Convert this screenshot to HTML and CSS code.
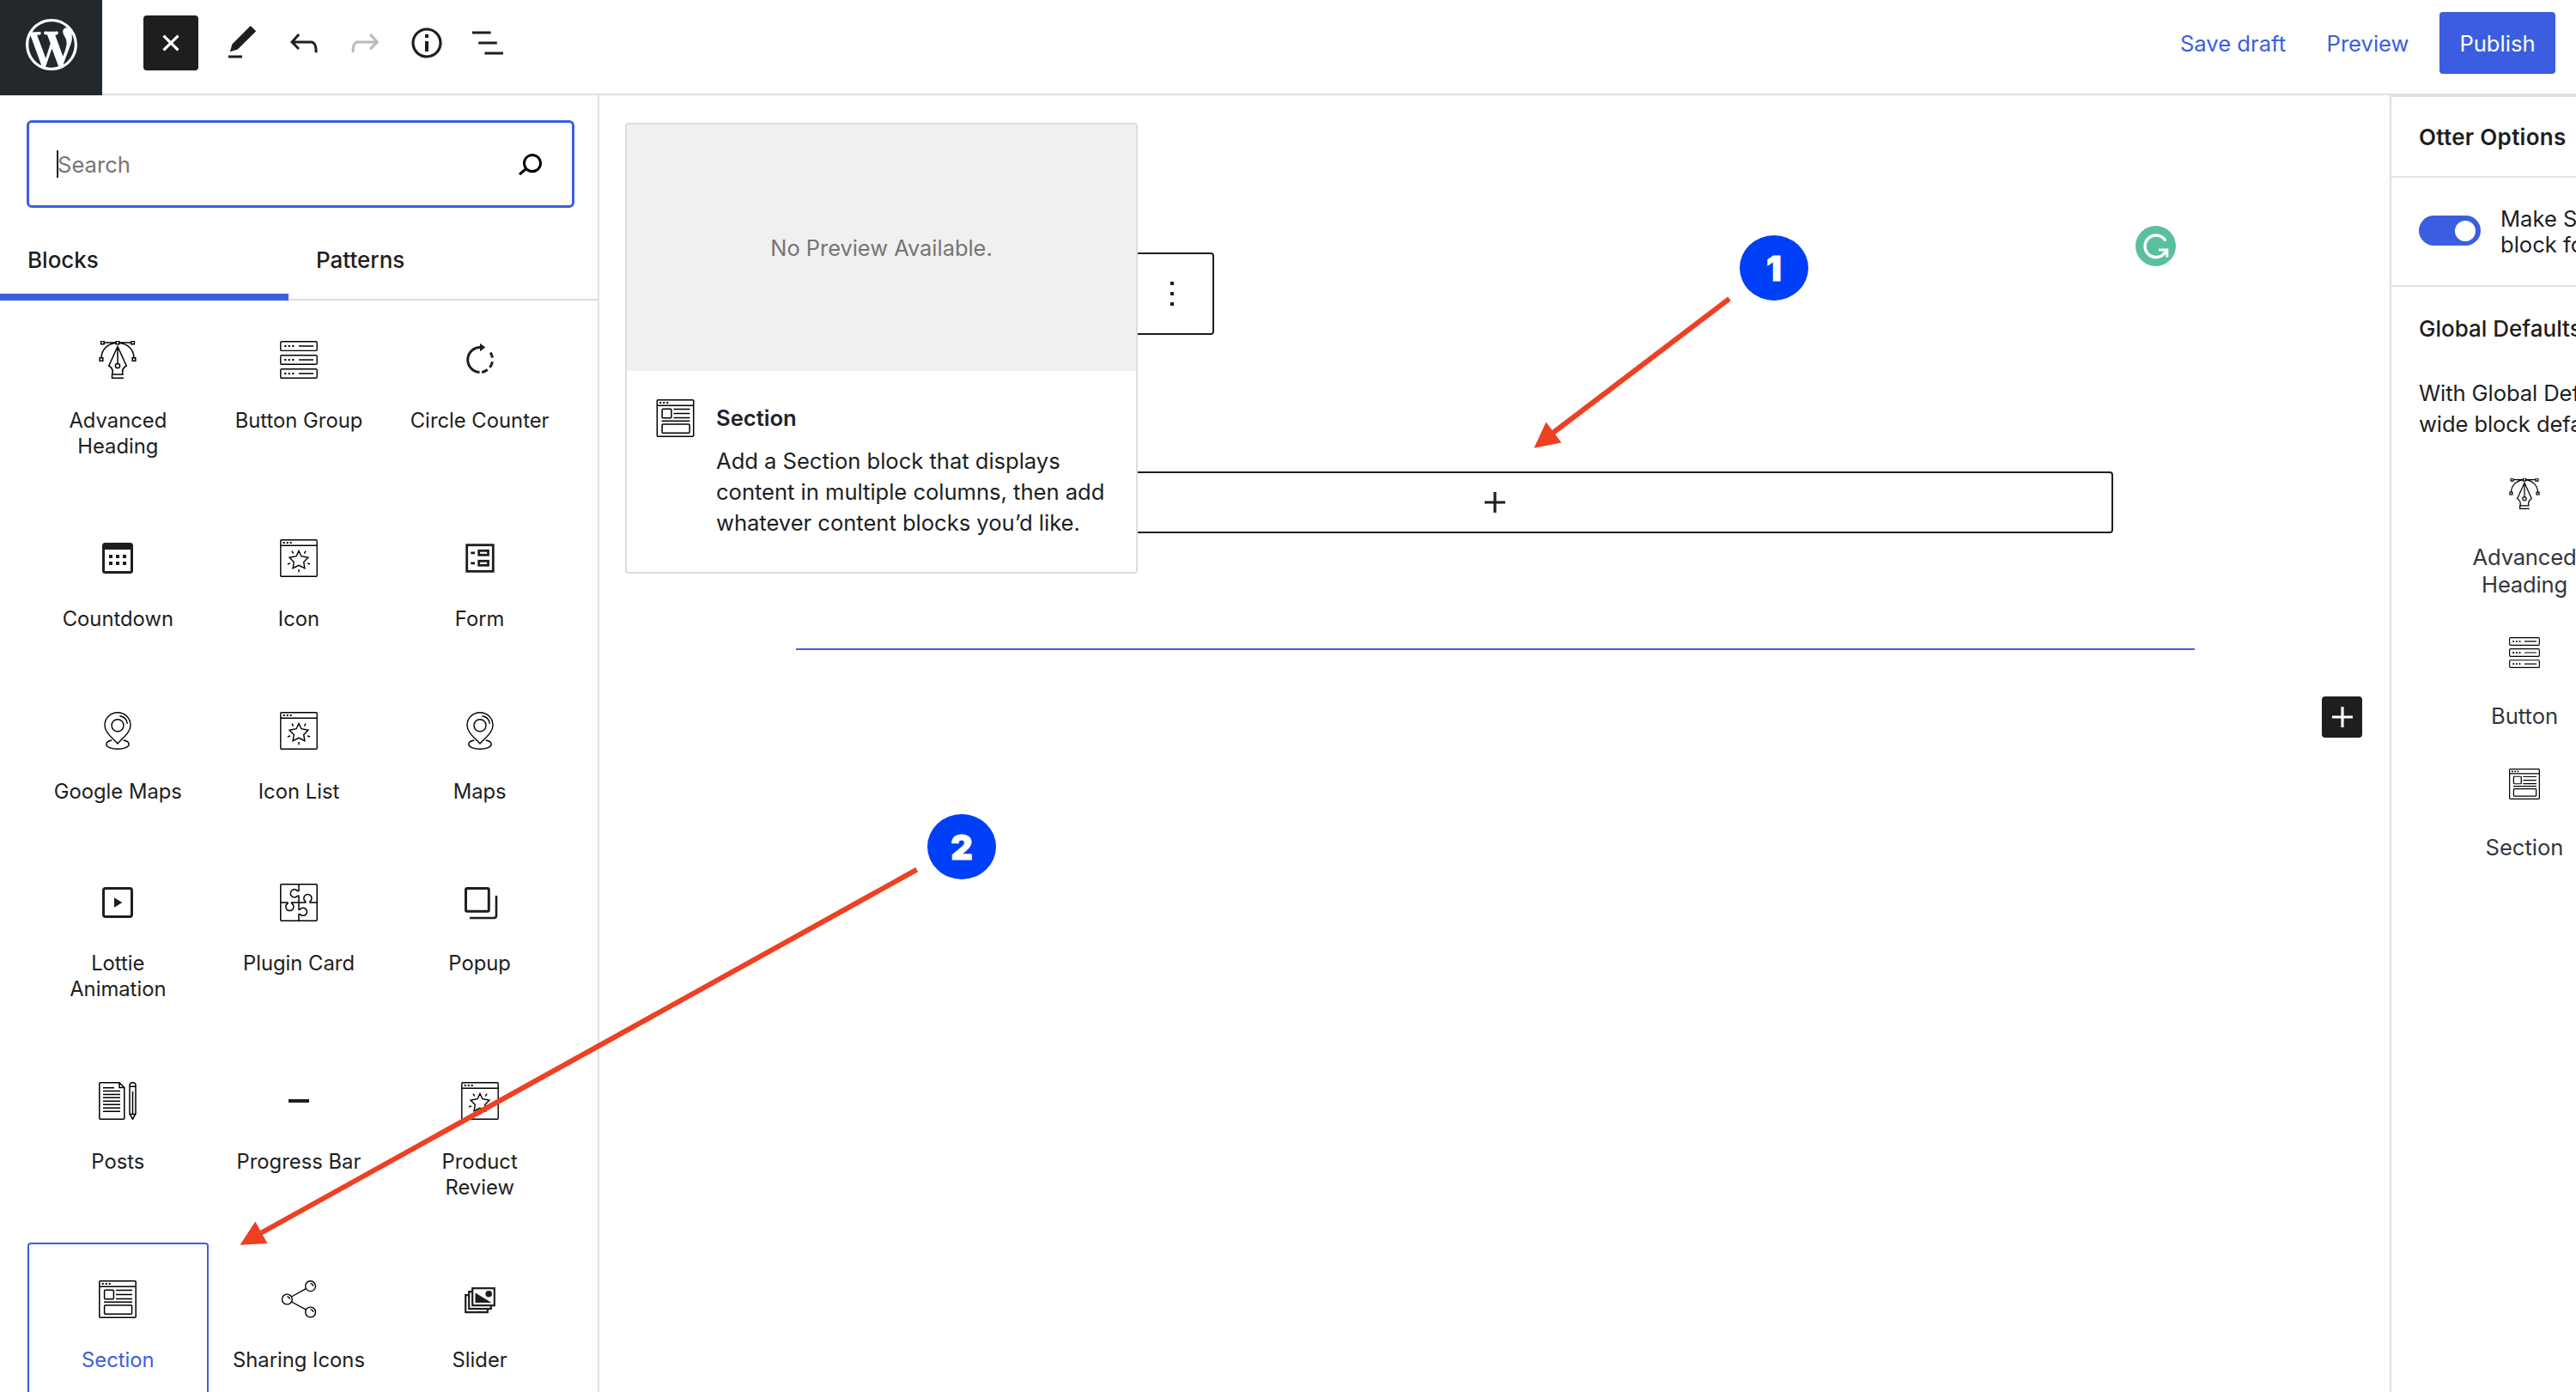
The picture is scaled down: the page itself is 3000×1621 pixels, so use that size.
FILE: index.html
```html
<!DOCTYPE html>
<html lang="en">
<head>
<meta charset="utf-8">
<title>Edit Post</title>
<link rel="stylesheet" href="styles.css">
</head>
<body>
<svg class="sprite" aria-hidden="true">
  <symbol id="i-heading" viewBox="0 0 44 44"><g fill="none" stroke="#000" stroke-width="1.5"><path d="M6.5 2H20M24 2h13.500M20 2.300C10 3.500 3.500 10 3 19.500M24 2.300C34 3.500 40.500 10 41 19.500"/><path fill="#fff" d="M2.600.3h3.600v3.500H2.600zM20.200.3h3.600v3.500h-3.600zM37.800.3h3.600v3.500h-3.600zM1.200 19.700h3.600v3.500H1.200zM39.200 19.700h3.600v3.500h-3.600z"/><path d="M22 6.500 11.800 29c3.700 2 5.200 5 4 10H28c-1.200-5 .3-8 4.200-10zM22 6.500v20M29 43.300H15.500V39H28"/><circle cx="22" cy="29" r="2.600"/></g></symbol>
  <symbol id="i-buttons" viewBox="0 0 44 44"><g fill="none" stroke="#000" stroke-width="1.400"><rect x=".8" y=".8" width="42.400" height="10.600" rx="1.200"/><rect x=".8" y="16.700" width="42.400" height="10.600" rx="1.200"/><rect x=".8" y="32.700" width="42.400" height="10.600" rx="1.200"/><path d="M22 6h17M22 22h17M22 38h17"/><path stroke-width="2.200" d="M5.200 6h2.200m2.300 0h2.200m2.300 0h2.200M5.200 22h2.200m2.300 0h2.200m2.300 0h2.200M5.200 38h2.200m2.300 0h2.200m2.300 0h2.200"/></g></symbol>
  <symbol id="i-counter" viewBox="0 0 44 44"><g fill="none" stroke="#1e1e1e" stroke-width="3"><path d="M23 7.500A14.500 14.500 0 0 0 21.500 36.500"/><path d="M34.200 13.500a14.500 14.500 0 0 1 2.200 6M36.400 24.200a14.500 14.500 0 0 1-2.900 6.700M30.800 33.500a14.500 14.500 0 0 1-6.700 2.900"/></g><path fill="#1e1e1e" d="M22 2.700 28.300 7.500 22 12.300z"/></symbol>
  <symbol id="i-countdown" viewBox="0 0 44 44"><rect x="5.500" y="5.500" width="33" height="33" rx="2" fill="none" stroke="#1e1e1e" stroke-width="3"/><path fill="#1e1e1e" d="M5 5h34v7H5zM12 18h4v4h-4zM20 18h4v4h-4zM28 18h4v4h-4zM12 26h4v4h-4zM20 26h4v4h-4zM28 26h4v4h-4z"/></symbol>
  <symbol id="i-star" viewBox="0 0 44 44"><g fill="none" stroke="#000" stroke-width="1.400"><rect x=".8" y=".8" width="42.400" height="42.400" rx="1"/><path d="M1 7.300h42"/><path stroke-width="2" d="M3.700 4.100h2m2 0h2m2 0h2"/><path d="M22 13.500l2.900 6.200 8 1.500-5.200 5.200 1.200 7.300-6.900-3.300-6.900 3.300 1.200-7.300-5.200-5.200 8-1.500zM14 13.700l1.600 3M30 13.700l-1.600 3M9 29l3-1.200M35 29l-3-1.200M22 35v3.300"/></g></symbol>
  <symbol id="i-form" viewBox="0 0 44 44"><g fill="none" stroke="#1e1e1e" stroke-width="2.800"><rect x="6.700" y="6.700" width="30.600" height="30.600"/><rect x="20.700" y="13.300" width="10.800" height="5"/><rect x="20.700" y="25.300" width="10.800" height="5"/><path d="M11.300 15.900H16M11.300 27.900H16"/></g></symbol>
  <symbol id="i-pin" viewBox="0 0 44 44"><g fill="none" stroke="#000" stroke-width="1.400"><path d="M22 37C15 29.500 7 23.500 7 15.700a15 15 0 0 1 30 0C37 23.500 29 29.500 22 37z"/><circle cx="22" cy="15.700" r="7"/><path d="M24.300 4.700c5 .6 8.500 4 9 9.300M15.300 33c-4 .8-6.500 2.500-6.500 4.700 0 3 5.500 5.500 13.200 5.500s13.200-2.500 13.200-5.500c0-2.200-2.500-3.900-6.500-4.700"/></g></symbol>
  <symbol id="i-play" viewBox="0 0 44 44"><rect x="5.500" y="5.500" width="33" height="33" rx="2.500" fill="none" stroke="#1e1e1e" stroke-width="3"/><path fill="#1e1e1e" d="M18 16.300 27.300 22 18 27.700z"/></symbol>
  <symbol id="i-puzzle" viewBox="0 0 44 44"><g fill="none" stroke="#000" stroke-width="1.500"><rect x=".8" y=".8" width="42.400" height="42.400" rx="1"/><path d="M22 1v7.500h-1.500a4.600 4.600 0 1 0 0 5.800H22V31M22 22h7.800v-1.200a4.600 4.600 0 1 1 5.200 0V22h8M1 22h8v1a4.600 4.600 0 1 0 4.800 0v-1H22M22 43v-7.500h1.200a4.600 4.600 0 1 0 0-5.500H22"/></g></symbol>
  <symbol id="i-popup" viewBox="0 0 44 44"><g fill="none" stroke="#1e1e1e" stroke-width="3"><rect x="5.500" y="5.500" width="26.800" height="26.800" rx="1.500"/><path stroke-width="2.600" d="M41 14v23q0 3-3 3H10"/></g></symbol>
  <symbol id="i-posts" viewBox="0 0 44 44"><g fill="none" stroke="#000" stroke-width="1.500"><path d="M24 .8H1.800q-1 0-1 1v40.400q0 1 1 1h27q1 0 1-1V6.500zM24 .8v5.700h5.800M5 6.700h13M5 10.500h20M5 14.400h20M5 18.300h20M5 22.300h20M5 26.300h20M5 30.300h20M5 34.300h20"/><path d="M36 4q0-3.200 3.500-3.200T43 4v33l-3.500 6.200L36 37zM36 5.200h7M39.500 11v26M36 37.500h7"/></g></symbol>
  <symbol id="i-bar" viewBox="0 0 44 44"><path fill="#1e1e1e" d="M10 20h24v4H10z"/></symbol>
  <symbol id="i-section" viewBox="0 0 44 44"><g fill="none" stroke="#000" stroke-width="1.500"><rect x=".8" y=".8" width="42.400" height="42.400" rx="1"/><path d="M1 7.300h42"/><path stroke-width="2" d="M3.700 4.100h2m2 0h2m2 0h2"/><rect x="6.600" y="11.300" width="10.800" height="10.400" rx="1"/><path d="M20 11.600h19M20 16.600h19M20 21.600h19M6 25.300h33"/><rect x="6.600" y="28.900" width="32" height="10.400" rx="1"/></g></symbol>
  <symbol id="i-share" viewBox="0 0 44 44"><g fill="none" stroke="#000" stroke-width="1.400"><circle cx="35.600" cy="6.700" r="5.900"/><circle cx="8.400" cy="22" r="5.900"/><circle cx="35.600" cy="37" r="5.900"/><path d="M13.500 19 30.400 9.600M13.500 25l16.900 9.200M35.500 3.600q3 0 3.200 3M8.300 18.900q3 0 3.200 3M35.500 33.900q3 0 3.200 3"/></g></symbol>
  <symbol id="i-slider" viewBox="0 0 44 44"><g fill="none" stroke="#1e1e1e" stroke-width="2.200"><rect x="13.200" y="9.200" width="25.600" height="20"/><path d="M13 13.200H9.200v20h25.600V29M9 17.200H5.200v20h25.600V33"/></g><path fill="#1e1e1e" d="M16.500 14.500 35.500 26h-19z"/><circle cx="32.200" cy="15.700" r="3.800" fill="#1e1e1e"/></symbol>
</svg>

<header class="header">
  <div class="logo"><svg width="72" height="72" viewBox="-2 -2 24 24"><path fill="#fff" d="M20 10c0-5.510-4.490-10-10-10C4.480 0 0 4.490 0 10c0 5.520 4.480 10 10 10 5.510 0 10-4.480 10-10zM7.780 15.370L4.370 6.220c.55-.02 1.170-.08 1.170-.08.5-.06.44-1.130-.06-1.110 0 0-1.450.11-2.370.11-.18 0-.37 0-.58-.01C4.120 2.690 6.870 1.110 10 1.110c2.330 0 4.450.87 6.050 2.340-.68-.11-1.650.39-1.650 1.580 0 .74.45 1.360.9 2.100.35.61.55 1.360.55 2.460 0 1.490-1.400 5-1.400 5l-3.030-8.370c.54-.02.82-.17.82-.17.5-.05.44-1.250-.06-1.220 0 0-1.440.12-2.380.12-.87 0-2.330-.12-2.330-.12-.5-.03-.56 1.200-.06 1.220l.92.08 1.260 3.410zM17.410 10c.24-.64.74-1.870.43-4.250.7 1.290 1.050 2.710 1.050 4.250 0 3.290-1.730 6.240-4.400 7.780.97-2.590 1.940-5.200 2.920-7.780zM6.100 18.090C3.120 16.650 1.110 13.530 1.110 10c0-1.300.23-2.480.72-3.590C3.250 10.300 4.670 14.200 6.100 18.090zm4.030-6.630l2.580 6.980c-.86.29-1.760.45-2.710.45-.79 0-1.570-.11-2.290-.33.81-2.380 1.620-4.740 2.420-7.100z"/></svg></div>
  <div class="tools">
    <button class="close"><svg width="48" height="48" viewBox="0 0 24 24"><path fill="#fff" transform="rotate(45 12 12)" d="M18 11.200h-5.200V6h-1.600v5.200H6v1.600h5.200V18h1.600v-5.200H18z"/></svg></button>
    <div class="toolset">
      <svg width="48" height="48" viewBox="0 0 24 24"><path d="M20.100 5.100L16.900 2 6.200 12.700l-1.300 4.400 4.500-1.300L20.100 5.100zM4 20.800h8v-1.500H4v1.500z"/></svg>
      <svg width="48" height="48" viewBox="0 0 24 24"><path d="M18.300 11.700c-.6-.6-1.400-.9-2.300-.9H6.700l2.900-3.300-1.100-1-4.500 5L8.500 16l1-1-2.700-2.700H16c.5 0 .9.2 1.300.5 1 1 1 3.400 1 4.500v.3h1.500v-.2c0-1.500 0-4.300-1.500-5.700z"/></svg>
      <svg class="disabled" width="48" height="48" viewBox="0 0 24 24"><path d="M15.600 6.500l-1.100 1 2.900 3.300H8c-.9 0-1.700.3-2.300.9-1.400 1.500-1.400 4.200-1.400 5.600v.2h1.500v-.3c0-1.100 0-3.500 1-4.500.3-.3.7-.5 1.300-.5h9.200L14.500 15l1.100 1.100 4.600-4.600-4.600-5z"/></svg>
      <svg width="48" height="48" viewBox="0 0 24 24"><path d="M12 3.200c-4.800 0-8.800 3.900-8.800 8.800 0 4.800 3.900 8.800 8.800 8.800 4.800 0 8.800-3.900 8.800-8.800 0-4.800-4-8.800-8.800-8.800zm0 16c-4 0-7.200-3.300-7.200-7.200C4.800 8 8 4.800 12 4.800s7.200 3.300 7.200 7.200c0 4-3.200 7.200-7.200 7.200zM11 17h2v-6h-2v6zm0-8h2V7h-2v2z"/></svg>
      <svg width="48" height="48" viewBox="0 0 24 24"><path d="M13.800 5.200H3v1.500h10.800V5.200zm-3.600 12v1.500H21v-1.500H10.200zm7.200-6H6.600v1.500h10.800v-1.500z"/></svg>
    </div>
  </div>
  <nav class="actions"><a class="link">Save draft</a><a class="link">Preview</a><button class="publish">Publish</button></nav>
</header>

<div class="layout">
  <aside class="inserter">
    <div class="search"><span class="caret"></span><span class="placeholder">Search</span><svg width="48" height="48" viewBox="0 0 24 24"><path d="M13.500 6C10.500 6 8 8.500 8 11.500c0 1.100.3 2.100.9 3l-3.400 3 1 1.100 3.400-2.900c1 .9 2.200 1.400 3.600 1.400 3 0 5.500-2.500 5.500-5.500C19 8.500 16.500 6 13.500 6zm0 9.500c-2.200 0-4-1.800-4-4s1.800-4 4-4 4 1.800 4 4-1.800 4-4 4z"/></svg></div>
    <div class="tabs"><span class="tab active">Blocks</span><span class="tab">Patterns</span></div>
    <div class="grid">
      <div class="item"><svg><use href="#i-heading"/></svg><span>Advanced<br>Heading</span></div>
      <div class="item"><svg><use href="#i-buttons"/></svg><span>Button Group</span></div>
      <div class="item"><svg><use href="#i-counter"/></svg><span>Circle Counter</span></div>
      <div class="item"><svg><use href="#i-countdown"/></svg><span>Countdown</span></div>
      <div class="item"><svg><use href="#i-star"/></svg><span>Icon</span></div>
      <div class="item"><svg><use href="#i-form"/></svg><span>Form</span></div>
      <div class="item"><svg><use href="#i-pin"/></svg><span>Google Maps</span></div>
      <div class="item"><svg><use href="#i-star"/></svg><span>Icon List</span></div>
      <div class="item"><svg><use href="#i-pin"/></svg><span>Maps</span></div>
      <div class="item"><svg><use href="#i-play"/></svg><span>Lottie<br>Animation</span></div>
      <div class="item"><svg><use href="#i-puzzle"/></svg><span>Plugin Card</span></div>
      <div class="item"><svg><use href="#i-popup"/></svg><span>Popup</span></div>
      <div class="item"><svg><use href="#i-posts"/></svg><span>Posts</span></div>
      <div class="item"><svg><use href="#i-bar"/></svg><span>Progress Bar</span></div>
      <div class="item"><svg><use href="#i-star"/></svg><span>Product<br>Review</span></div>
      <div class="item selected"><svg><use href="#i-section"/></svg><span>Section</span></div>
      <div class="item"><svg><use href="#i-share"/></svg><span>Sharing Icons</span></div>
      <div class="item"><svg><use href="#i-slider"/></svg><span>Slider</span></div>
    </div>
  </aside>

  <main class="canvas">
    <div class="block-toolbar"><svg width="48" height="48" viewBox="0 0 24 24"><path d="M13 19h-2v-2h2v2zm0-6h-2v-2h2v2zm0-6h-2V5h2v2z"/></svg></div>
    <div class="appender"><svg width="48" height="48" viewBox="0 0 24 24"><path d="M18 11.200h-5.200V6h-1.600v5.200H6v1.600h5.200V18h1.600v-5.200H18z"/></svg></div>
    <div class="insertion-line"></div>
    <button class="add-block"><svg width="48" height="48" viewBox="0 0 24 24"><path fill="#fff" d="M18 11.200h-5.200V6h-1.600v5.200H6v1.600h5.200V18h1.600v-5.200H18z"/></svg></button>
  </main>

  <aside class="settings">
    <h2 class="settings-title">Otter Options</h2>
    <div class="toggle-row"><span class="toggle"><span class="knob"></span></span><span class="toggle-label">Make S<br>block fo</span></div>
    <h3 class="group-title">Global Defaults</h3>
    <p class="group-text">With Global Def<br>wide block defa</p>
    <div class="defaults">
      <div class="default two-line"><svg><use href="#i-heading"/></svg><span>Advanced<br>Heading</span></div>
      <div class="default"><svg><use href="#i-buttons"/></svg><span>Button</span></div>
      <div class="default"><svg><use href="#i-section"/></svg><span>Section</span></div>
    </div>
  </aside>
</div>

<div class="preview">
  <div class="preview-empty">No Preview Available.</div>
  <div class="preview-card">
    <svg><use href="#i-section"/></svg>
    <div><div class="preview-title">Section</div><p class="preview-text">Add a Section block that displays<br>content in multiple columns, then add<br>whatever content blocks you’d like.</p></div>
  </div>
</div>

<svg class="grammar" width="47" height="47" viewBox="0 0 47 47"><circle cx="23.500" cy="23.500" r="23.500" fill="#5ac09b"/><path fill="none" stroke="#fff" stroke-width="3.400" d="M35 17.500A12.800 12.800 0 1 0 35 30"/><path fill="none" stroke="#fff" stroke-width="3.200" d="M27 28h9.700v8.500"/></svg>

<svg class="annotations" width="3000" height="1621" viewBox="0 0 3000 1621"><g fill="#ee4023"><path d="M1786.500 521.700 1800.500 491.500 1818.500 515.500z"/><path d="M279.500 1449.700 297.300 1422.500 311.500 1448z"/></g><g stroke="#ee4023" stroke-width="6"><path d="M2014 347.800 1806 506"/><path d="M1067.700 1012.700 300 1438"/></g></svg>
<div class="badge badge-one">1</div>
<div class="badge badge-two">2</div>
</body>
</html>
```

FILE: styles.css
```css
* { box-sizing: border-box; }

body {
  margin: 0;
  width: 3000px;
  height: 1621px;
  overflow: hidden;
  position: relative;
  display: flex;
  flex-direction: column;
  background: #fff;
  color: #1e1e1e;
  font: 400 25.6px/36px Inter, "Liberation Sans", sans-serif;
}

svg { display: block; flex: none; fill: #1e1e1e; }
.sprite { position: absolute; width: 0; height: 0; }
button { border: 0; padding: 0; font: inherit; }
h2, h3, p { margin: 0; }

/* Top bar */
.header {
  display: flex;
  flex: none;
  height: 111px;
  border-bottom: 2px solid #e0e0e0;
}
.logo {
  width: 119px;
  height: 111px;
  background: #23282d;
  padding: 16px 0 0 24px;
}
.tools { display: flex; align-items: flex-start; padding: 18px 0 0 48px; gap: 27px; }
.close {
  width: 64px;
  height: 64px;
  border-radius: 4px;
  background: #1e1e1e;
  display: flex;
  align-items: center;
  justify-content: center;
}
.toolset { display: flex; align-items: center; height: 64px; gap: 23.5px; }
.disabled { opacity: .3; }
.actions {
  margin-left: auto;
  display: flex;
  align-items: center;
  height: 72px;
  margin-top: 14px;
  padding-right: 24px;
}
.link { color: #3b5ee1; margin-right: 47.500px; padding-top: 1px; }
.link + .link { margin-right: 35.500px; }
.publish {
  width: 135px;
  height: 72px;
  border-radius: 4px;
  background: #3b5ee1;
  color: #fff;
  padding-top: 1px;
}

.layout { display: flex; flex: 1; min-height: 0; }

/* Block library */
.inserter {
  width: 698px;
  border-right: 2px solid #e0e0e0;
  padding-top: 29px;
  overflow: hidden;
}
.search {
  margin: 0 27px 0 31px;
  height: 102px;
  border: 3px solid #3b5ee1;
  border-radius: 6px;
  display: flex;
  align-items: center;
  padding: 0 25px 0 32px;
}
.search svg { margin-left: auto; fill: #000; }
.caret { width: 2px; height: 32px; background: #1e1e1e; margin-right: -1px; }
.placeholder { color: #757575; padding-top: 1px; }
.tabs { display: flex; height: 108px; border-bottom: 2px solid #ddd; }
.tab {
  width: 336px;
  height: 108px;
  padding: 43px 0 0 32px;
  font-size: 26px;
  font-weight: 500;
}
.tab.active { border-bottom: 8px solid #3b5ee1; }
.grid {
  display: grid;
  grid-template-columns: repeat(3, 210.670px);
  padding: 3px 0 0 32px;
}
.item {
  display: flex;
  flex-direction: column;
  align-items: center;
  gap: 34px;
  padding: 44px 0 48.800px;
  font-size: 23.800px;
  line-height: 30px;
  text-align: center;
}
.item svg { width: 44px; height: 44px; }
.item.selected {
  color: #3b5ee1;
  border: 2px solid #3b5ee1;
  border-radius: 4px;
  padding: 42px 0 48px;
}

/* Editor canvas */
.canvas {
  flex: 1;
  display: flex;
  flex-direction: column;
  align-items: flex-start;
  padding-top: 183px;
}
.block-toolbar {
  margin-left: 323px;
  width: 393px;
  height: 96px;
  border: 2px solid #1e1e1e;
  border-radius: 4px;
  display: flex;
  align-items: center;
  justify-content: flex-end;
  padding-right: 23px;
}
.appender {
  margin: 159px 0 0 323px;
  width: 1440px;
  height: 72px;
  border: 2px solid #1e1e1e;
  border-radius: 4px;
  display: flex;
  align-items: center;
  justify-content: center;
}
.insertion-line { margin: 134px 0 0 229px; width: 1629px; height: 2px; background: #3b5ee1; }
.add-block {
  align-self: flex-end;
  margin: 54px 32px 0 0;
  width: 47px;
  height: 48px;
  border-radius: 4px;
  background: #1e1e1e;
  display: flex;
  justify-content: center;
}

/* Settings sidebar */
.settings {
  width: 217px;
  border-left: 2px solid #e0e0e0;
  overflow: hidden;
  white-space: nowrap;
}
.settings-title {
  height: 96px;
  border-top: 2px solid #e0e0e0;
  border-bottom: 2px solid #e0e0e0;
  padding: 29px 0 0 32px;
  font-size: 26px;
  font-weight: 600;
  letter-spacing: .3px;
}
.toggle-row {
  display: flex;
  gap: 23px;
  height: 127px;
  border-bottom: 2px solid #e0e0e0;
  padding: 32px 0 0 32px;
}
.toggle {
  flex: none;
  width: 72px;
  height: 35px;
  margin-top: 12px;
  border-radius: 18px;
  background: #3b5ee1;
  padding: 5.500px 6px;
  display: flex;
  justify-content: flex-end;
}
.knob { width: 24px; height: 24px; border-radius: 50%; background: #fff; }
.toggle-label { line-height: 30px; padding-top: 1px; }
.group-title { padding: 31px 0 0 32px; font-size: 26px; font-weight: 500; }
.group-text { padding: 39px 0 0 32px; letter-spacing: -.1px; }
.defaults { padding: 45px 0 0 58px; width: 254px; }
.default {
  display: flex;
  flex-direction: column;
  align-items: center;
  width: 194px;
  height: 153px;
  gap: 40px;
  color: #32373c;
  line-height: 32px;
  text-align: center;
}
.default.two-line { height: 185px; letter-spacing: -.2px; }
.default svg { width: 36px; height: 36px; }

/* Block preview popover */
.preview {
  position: absolute;
  left: 728px;
  top: 143px;
  width: 597px;
  height: 525px;
  border: 2px solid #ddd;
  border-radius: 4px;
  background: #fff;
}
.preview-empty {
  height: 287px;
  background: #f0f0f0;
  color: #757575;
  font-size: 25.400px;
  display: flex;
  align-items: center;
  justify-content: center;
}
.preview-card { display: flex; gap: 25px; padding: 33px 0 0 34px; }
.preview-card svg { width: 45px; height: 44px; }
.preview-title { padding-top: 4px; font-weight: 600; color: #1d2327; }
.preview-text { padding-top: 14px; letter-spacing: -.03px; }

.grammar { position: absolute; left: 2487px; top: 263px; }

/* Callouts */
.annotations { position: absolute; left: 0; top: 0; }
.badge {
  position: absolute;
  width: 80px;
  height: 76px;
  border-radius: 50%;
  background: #003ff8;
  color: #fff;
  font-size: 39.500px;
  font-weight: 900;
  line-height: 79px;
  text-align: center;
  -webkit-text-stroke: .8px #fff;
}
.badge-one { left: 2026px; top: 274px; }
.badge-two { left: 1080px; top: 948px; }
```
